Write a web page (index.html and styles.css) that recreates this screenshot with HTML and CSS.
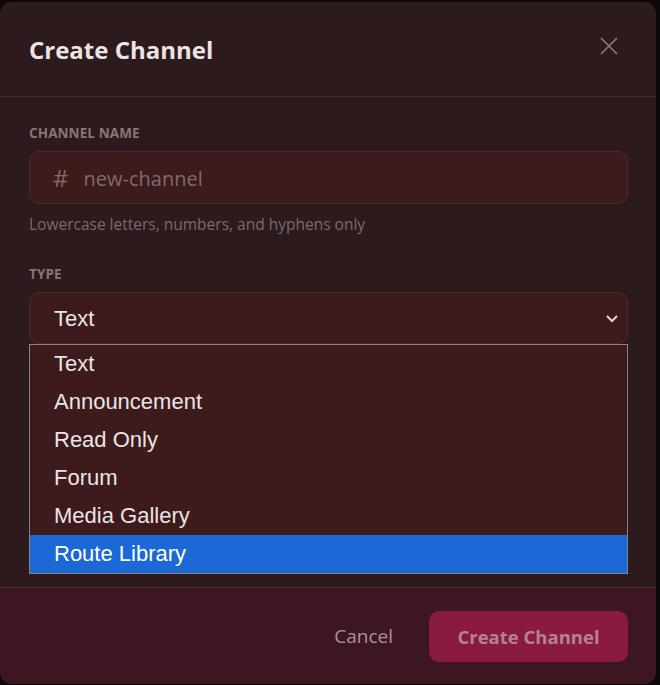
FILE: index.html
```html
<!DOCTYPE html>
<html lang="en">

<head>
    <meta charset="UTF-8">
    <meta name="viewport" content="width=device-width, initial-scale=1.0">
    <title>Create Channel</title>
    <link rel="stylesheet" href="styles.css">
</head>

<body>
    <div class="modal">
        <div class="modal-header">
            <h2>Create Channel</h2>
            <button class="close-btn" aria-label="Close">
                <svg width="20" height="20" viewBox="0 0 20 20">
                    <path d="M2 2 L18 18 M18 2 L2 18" stroke="currentColor" stroke-width="1.6" fill="none" />
                </svg>
            </button>
        </div>

        <div class="modal-body">
            <div class="field">
                <label class="field-label">Channel Name</label>
                <div class="name-input">
                    <span class="hash">#</span>
                    <span class="placeholder">new-channel</span>
                </div>
                <p class="hint">Lowercase letters, numbers, and hyphens only</p>
            </div>

            <div class="field type-field">
                <label class="field-label">Type</label>
                <div class="select-box">
                    <span class="select-value">Text</span>
                    <svg class="chevron" width="14" height="9" viewBox="0 0 14 9">
                        <path d="M2 2 L7 7 L12 2" stroke="currentColor" stroke-width="2" fill="none" />
                    </svg>
                </div>
                <!-- open dropdown list of the select -->
                <ul class="select-menu">
                    <li>Text</li>
                    <li>Announcement</li>
                    <li>Read Only</li>
                    <li>Forum</li>
                    <li>Media Gallery</li>
                    <li class="active">Route Library</li>
                </ul>
            </div>
        </div>

        <div class="modal-footer">
            <button class="cancel-btn">Cancel</button>
            <button class="create-btn" disabled>Create Channel</button>
        </div>
    </div>
</body>

</html>
```

FILE: styles.css
```css
/* dark maroon theme */
body {
    margin: 0;
    background-color: #0e0809;
    font-family: "Open Sans", "Noto Sans", sans-serif;
}

.modal {
    width: 656px;
    margin-top: 2px;
    background-color: #2d1a1c;
    border-radius: 12px;
    overflow: hidden;
}

.modal-header {
    height: 94px;
    padding: 0 29px;
    display: flex;
    align-items: center;
    justify-content: space-between;
    border-bottom: 1px solid #4a2a2e;
}

.modal-header h2 {
    margin: 0;
    font-size: 24px;
    font-weight: 700;
    color: #ece4e4;
}

.close-btn {
    background: none;
    border: none;
    padding: 0;
    margin-right: 8px;
    margin-top: -6px;
    color: #8c7c7e;
    cursor: pointer;
    display: flex;
}

.modal-body {
    padding: 25px 28px 0 29px;
    height: 465px;
}

.field {
    margin-bottom: 29px;
}

.type-field {
    position: relative;
}

.field-label {
    display: block;
    font-size: 13.5px;
    line-height: 23px;
    font-weight: 700;
    letter-spacing: 0.1px;
    text-transform: uppercase;
    color: #8a7476;
    margin-bottom: 6px;
}

.name-input {
    height: 51px;
    display: flex;
    align-items: center;
    padding: 0 23px;
    background-color: #3d1a1c;
    border: 1px solid #4c2a2c;
    border-radius: 10px;
}

.hash {
    font-size: 24px;
    color: #7c6a6c;
    margin-right: 15px;
}

.placeholder {
    font-size: 20px;
    padding-top: 2px;
    color: #7c6c6e;
}

.hint {
    margin: 10px 0 0;
    font-size: 15.5px;
    line-height: 20px;
    color: #7a6a6c;
}

.select-box {
    height: 50px;
    display: flex;
    align-items: center;
    justify-content: space-between;
    padding: 0 8px 0 24px;
    background-color: #3d1a1c;
    border: 1px solid #4c2a2c;
    border-radius: 10px;
    font-family: "Liberation Sans", Arial, sans-serif;
    font-size: 22px;
    color: #ece4e4;
}

.select-value {
    padding-top: 2px;
}

.chevron {
    color: #e0d8d8;
}

.select-menu {
    position: absolute;
    top: 81px;
    left: 0;
    right: 0;
    margin: 0;
    padding: 0;
    list-style: none;
    background-color: #3d1a1c;
    border: 1px solid #8a8284;
    font-family: "Liberation Sans", Arial, sans-serif;
    font-size: 22px;
    color: #ece4e4;
}

.select-menu li {
    height: 38px;
    line-height: 38px;
    padding-left: 24px;
}

.select-menu li.active {
    background-color: #1a69d6;
    color: #ffffff;
}

.modal-footer {
    height: 96px;
    display: flex;
    align-items: center;
    justify-content: flex-end;
    gap: 12px;
    padding: 0 28px;
    background-color: #3c1620;
    border-top: 1px solid #4a2a2e;
}

.cancel-btn {
    background: none;
    border: none;
    padding: 10px 24px;
    font-family: inherit;
    font-size: 19px;
    color: #a8929a;
    cursor: pointer;
}

.create-btn {
    width: 199px;
    height: 51px;
    border: none;
    border-radius: 10px;
    background-color: #8a1a40;
    font-family: inherit;
    font-size: 18.5px;
    font-weight: 700;
    color: #b28492;
}
```
